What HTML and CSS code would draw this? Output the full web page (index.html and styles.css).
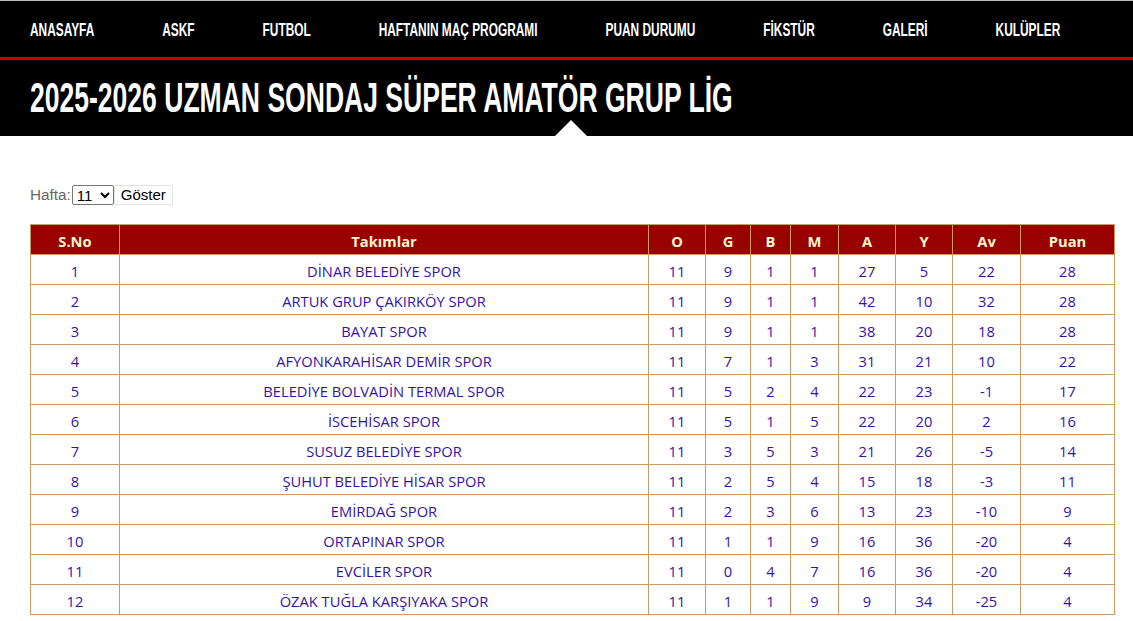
FILE: index.html
```html
<!DOCTYPE html>
<html lang="tr">
<head>
<meta charset="utf-8">
<title>Puan Durumu</title>
<link rel="stylesheet" href="styles.css">
</head>
<body>
<header class="site-header">
  <nav class="main-nav">
    <div class="nav-inner">
      <a href="#">ANASAYFA</a>
      <a href="#">ASKF</a>
      <a href="#">FUTBOL</a>
      <a href="#">HAFTANIN MAÇ PROGRAMI</a>
      <a href="#">PUAN DURUMU</a>
      <a href="#">FİKSTÜR</a>
      <a href="#">GALERİ</a>
      <a href="#">KULÜPLER</a>
    </div>
  </nav>
  <div class="page-title">
    <h1>2025-2026 UZMAN SONDAJ SÜPER AMATÖR GRUP LİG</h1>
    <span class="pointer"></span>
  </div>
</header>
<main class="content">
  <form class="week-form">
    <label>Hafta:</label><select><option>11</option></select><button type="button">Göster</button>
  </form>
  <table class="standings">
    <colgroup>
      <col class="c-no"><col class="c-team"><col class="c-o"><col class="c-g"><col class="c-b"><col class="c-m"><col class="c-a"><col class="c-y"><col class="c-av"><col class="c-p">
    </colgroup>
    <thead>
      <tr><th>S.No</th><th>Takımlar</th><th>O</th><th>G</th><th>B</th><th>M</th><th>A</th><th>Y</th><th>Av</th><th>Puan</th></tr>
    </thead>
    <tbody>
      <tr><td>1</td><td>DİNAR BELEDİYE SPOR</td><td>11</td><td>9</td><td>1</td><td>1</td><td>27</td><td>5</td><td>22</td><td>28</td></tr>
      <tr><td>2</td><td>ARTUK GRUP ÇAKIRKÖY SPOR</td><td>11</td><td>9</td><td>1</td><td>1</td><td>42</td><td>10</td><td>32</td><td>28</td></tr>
      <tr><td>3</td><td>BAYAT SPOR</td><td>11</td><td>9</td><td>1</td><td>1</td><td>38</td><td>20</td><td>18</td><td>28</td></tr>
      <tr><td>4</td><td>AFYONKARAHİSAR DEMİR SPOR</td><td>11</td><td>7</td><td>1</td><td>3</td><td>31</td><td>21</td><td>10</td><td>22</td></tr>
      <tr><td>5</td><td>BELEDİYE BOLVADİN TERMAL SPOR</td><td>11</td><td>5</td><td>2</td><td>4</td><td>22</td><td>23</td><td>-1</td><td>17</td></tr>
      <tr><td>6</td><td>İSCEHİSAR SPOR</td><td>11</td><td>5</td><td>1</td><td>5</td><td>22</td><td>20</td><td>2</td><td>16</td></tr>
      <tr><td>7</td><td>SUSUZ BELEDİYE SPOR</td><td>11</td><td>3</td><td>5</td><td>3</td><td>21</td><td>26</td><td>-5</td><td>14</td></tr>
      <tr><td>8</td><td>ŞUHUT BELEDİYE HİSAR SPOR</td><td>11</td><td>2</td><td>5</td><td>4</td><td>15</td><td>18</td><td>-3</td><td>11</td></tr>
      <tr><td>9</td><td>EMİRDAĞ SPOR</td><td>11</td><td>2</td><td>3</td><td>6</td><td>13</td><td>23</td><td>-10</td><td>9</td></tr>
      <tr><td>10</td><td>ORTAPINAR SPOR</td><td>11</td><td>1</td><td>1</td><td>9</td><td>16</td><td>36</td><td>-20</td><td>4</td></tr>
      <tr><td>11</td><td>EVCİLER SPOR</td><td>11</td><td>0</td><td>4</td><td>7</td><td>16</td><td>36</td><td>-20</td><td>4</td></tr>
      <tr><td>12</td><td>ÖZAK TUĞLA KARŞIYAKA SPOR</td><td>11</td><td>1</td><td>1</td><td>9</td><td>9</td><td>34</td><td>-25</td><td>4</td></tr>
    </tbody>
  </table>
</main>
</body>
</html>
```
FILE: styles.css
```css
html, body {
  margin: 0;
  padding: 0;
  background: #fff;
}

.site-header {
  background: #000;
}

.main-nav {
  height: 60px;
  box-sizing: border-box;
  border-top: 1px solid #bbb;
  border-bottom: 3px solid #d10000;
  padding-left: 30px;
  display: flex;
  align-items: center;
  overflow: hidden;
}

.nav-inner {
  display: flex;
  gap: 103px;
  white-space: nowrap;
  transform: scaleX(0.66);
  transform-origin: left center;
  padding-top: 2px;
}

.main-nav a {
  color: #fff;
  text-decoration: none;
  font-family: "Liberation Sans", Arial, sans-serif;
  font-weight: bold;
  font-size: 18px;
}

.page-title {
  position: relative;
  height: 76px;
  padding-left: 30px;
  display: flex;
  align-items: center;
  overflow: hidden;
}

.page-title h1 {
  margin: 0;
  color: #fff;
  font-family: "Liberation Sans", Arial, sans-serif;
  font-weight: bold;
  font-size: 43px;
  line-height: 1;
  white-space: nowrap;
  transform: scaleX(0.617);
  transform-origin: left center;
  padding-bottom: 2px;
}

.pointer {
  position: absolute;
  left: 555px;
  bottom: 0;
  width: 0;
  height: 0;
  border-left: 16px solid transparent;
  border-right: 16px solid transparent;
  border-bottom: 16px solid #fff;
}

.content {
  padding: 48px 19px 0 30px;
}

.week-form {
  display: flex;
  align-items: center;
  height: 21px;
  margin-bottom: 19px;
  font-family: "Liberation Sans", Arial, sans-serif;
}

.week-form label {
  color: #666;
  font-size: 15.3px;
  margin-right: 1px;
}

.week-form select {
  font-family: "Liberation Sans", Arial, sans-serif;
  font-size: 15px;
  width: 42px;
  height: 20px;
  padding: 0;
  border: 1px solid #767676;
  border-radius: 2px;
  background: #fff;
  color: #000;
}

.week-form button {
  font-family: "Liberation Sans", Arial, sans-serif;
  font-size: 15px;
  width: 59px;
  height: 20px;
  padding: 0;
  border: 1px solid #e3e3e3;
  background: #fff;
  color: #000;
}

.standings {
  width: 1084px;
  border-collapse: collapse;
  table-layout: fixed;
  font-family: "Open Sans", "Noto Sans", sans-serif;
  font-size: 14.7px;
}

.c-no { width: 89px; }
.c-team { width: 529px; }
.c-o { width: 57px; }
.c-g { width: 45px; }
.c-b { width: 40px; }
.c-m { width: 48px; }
.c-a { width: 57px; }
.c-y { width: 57px; }
.c-av { width: 68px; }
.c-p { width: 94px; }

.standings th,
.standings td {
  border: 1px solid #cf9a62;
  text-align: center;
  padding: 2px 0 0;
}

.standings th {
  background: #990000;
  color: #fff6d0;
  font-weight: bold;
  height: 27px;
}

.standings td {
  color: #3512a6;
  height: 27px;
}
```
